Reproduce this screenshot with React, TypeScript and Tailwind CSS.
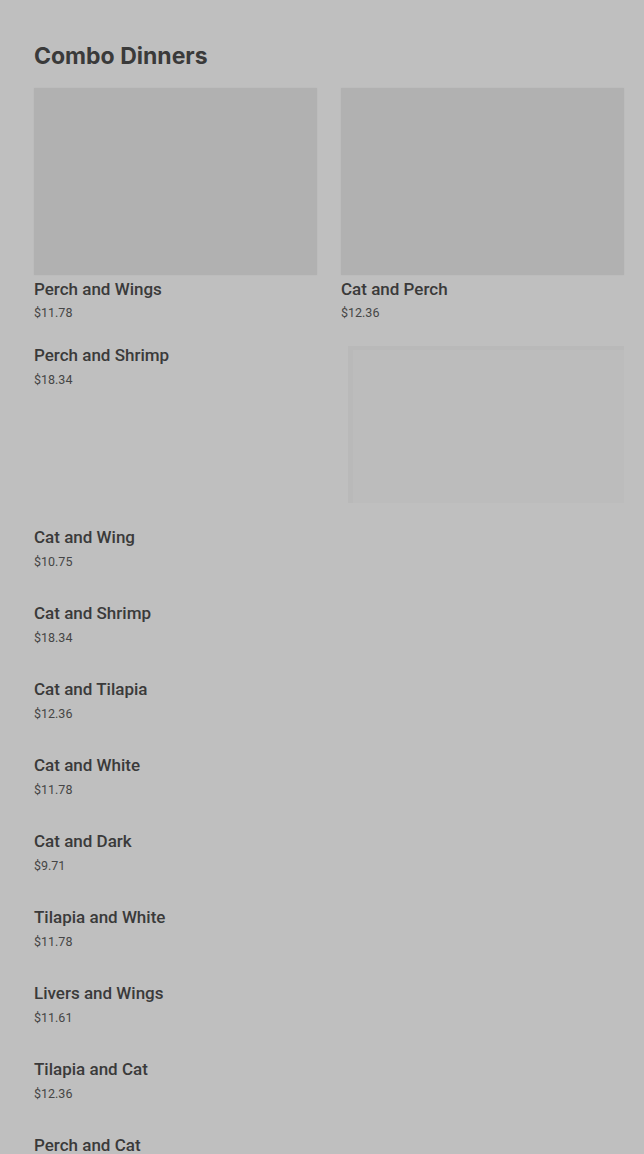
import { FC } from "react";

interface IDish {
  name: string;
  price: string;
}

const cards: IDish[] = [
  { name: "Perch and Wings", price: "$11.78" },
  { name: "Cat and Perch", price: "$12.36" },
];

const list: IDish[] = [
  { name: "Cat and Wing", price: "$10.75" },
  { name: "Cat and Shrimp", price: "$18.34" },
  { name: "Cat and Tilapia", price: "$12.36" },
  { name: "Cat and White", price: "$11.78" },
  { name: "Cat and Dark", price: "$9.71" },
  { name: "Tilapia and White", price: "$11.78" },
  { name: "Livers and Wings", price: "$11.61" },
  { name: "Tilapia and Cat", price: "$12.36" },
  { name: "Perch and Cat", price: "$12.36" },
];

const DishText: FC<{ dish: IDish; tight?: boolean }> = ({ dish, tight }) => (
  <div>
    <div className="text-[17px] leading-[20px] font-medium text-[#3a3a3a] font-['Roboto',sans-serif]">
      {dish.name}
    </div>
    <div
      className={
        "text-[12.5px] leading-[18px] text-[#454545] font-['Roboto',sans-serif] " +
        (tight ? "mt-[5px]" : "mt-[6px]")
      }
    >
      {dish.price}
    </div>
  </div>
);

const App: FC = () => {
  return (
    <div className="min-h-screen w-full bg-[#bfbfbf] px-[34px] pt-[42px] overflow-hidden h-[1154px]">
      <h2 className="text-[23px] leading-[28px] font-bold text-[#3a3a3a] font-['Inter',sans-serif]">
        Combo Dinners
      </h2>

      <div className="mt-[18px] grid grid-cols-2 gap-x-[24px] w-[590px]">
        {cards.map((dish) => (
          <div key={dish.name}>
            <div className="h-[187px] bg-[#b1b1b1] shadow-[0_0_2px_rgba(0,0,0,0.04)]" />
            <div className="mt-[4px]">
              <DishText dish={dish} tight />
            </div>
          </div>
        ))}
      </div>

      <div className="mt-[23px] grid grid-cols-2 gap-x-[24px] w-[590px]">
        <DishText dish={{ name: "Perch and Shrimp", price: "$18.34" }} />
        <div className="pl-[7px] pt-[1px]">
          <div className="h-[157px] bg-[#bcbcbc] border-l-[5px] border-t-[4px] border-[#b9b9b9]" />
        </div>
      </div>

      <div className="mt-[24px] flex flex-col gap-[32px]">
        {list.map((dish) => (
          <DishText key={dish.name} dish={dish} />
        ))}
      </div>
    </div>
  );
};

export default App;
